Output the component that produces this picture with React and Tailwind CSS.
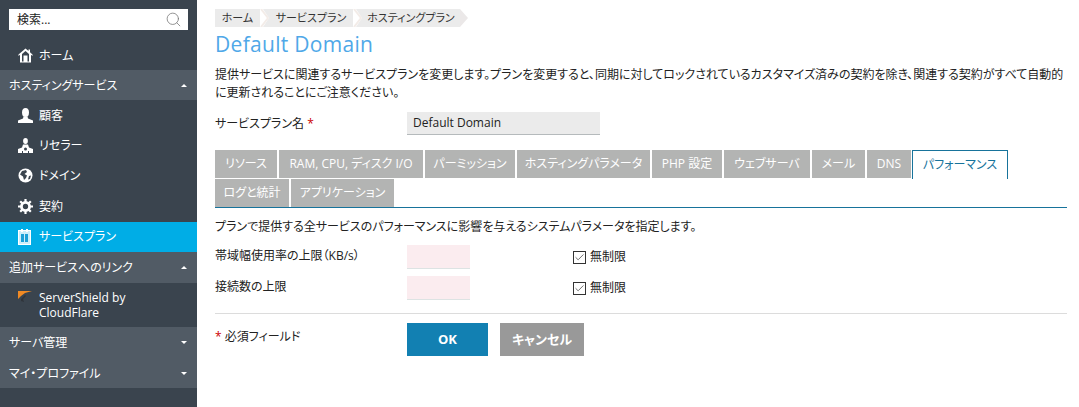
import React from "react";
import { Search, Check } from "lucide-react";

const jp = "font-['Open_Sans','Noto_Sans_CJK_JP',sans-serif] [font-feature-settings:'palt']";

const HomeIcon = () => (
    <svg width="15" height="15" viewBox="0 0 15 15" fill="#fff">
        <path d="M7.5 0.5 L10.5 3 V1.5 H12 V4.3 L14.5 6.5 V8 L13 6.8 V14.5 H2 V6.8 L0.5 8 V6.5 Z" />
        <path d="M7.5 3 L11 6 V13.5 H9.5 V7.5 H5.5 V13.5 H4 V6 Z" fill="#3a444e" />
        <rect x="6.5" y="8.5" width="2" height="5" fill="#fff" />
    </svg>
);
const UserIcon = () => (
    <svg width="15" height="15" viewBox="0 0 15 15" fill="#fff">
        <ellipse cx="7.5" cy="4.5" rx="3.5" ry="4.5" />
        <path d="M5.5 8.5 H9.5 L10 10.5 L15 12.5 V15 H0 V12.5 L5 10.5 Z" />
    </svg>
);
const ResellerIcon = () => (
    <svg width="15" height="15" viewBox="0 0 15 15" fill="#fff">
        <ellipse cx="7.5" cy="3" rx="2.4" ry="3" />
        <path d="M5 6.5 H10 L11 9.5 L15 11 V15 H0 V11 L4 9.5 Z" />
        <circle cx="7.5" cy="11" r="1.5" fill="#3a444e" />
        <rect x="4" y="13" width="1" height="2" fill="#3a444e" />
        <rect x="10" y="13" width="1" height="2" fill="#3a444e" />
    </svg>
);
const GlobeIcon = () => (
    <svg width="15" height="15" viewBox="0 0 15 15">
        <circle cx="7.5" cy="7.5" r="7" fill="#fff" />
        <path d="M4 3 L8 2 L9 4 L6.5 6 L9 7.5 L8 10 L6 12 L5 8.5 L2 6.5 Z M11 8 L13 7.5 L12 11 L10 11.5 Z" fill="#3a444e" />
    </svg>
);
const GearIcon = () => (
    <svg width="15" height="15" viewBox="0 0 24 24">
        <circle cx="12" cy="12" r="6.5" fill="none" stroke="#fff" strokeWidth="4.5" />
        <path d="M12 0v5M12 19v5M0 12h5M19 12h5M3.5 3.5l3.5 3.5M17 17l3.5 3.5M20.5 3.5L17 7M7 17l-3.5 3.5" stroke="#fff" strokeWidth="3.5" />
    </svg>
);
const PlanIcon = () => (
    <svg width="13" height="16" viewBox="0 0 13 16">
        <rect x="0.5" y="1.5" width="12" height="14" fill="#cdeefa" stroke="#fff" />
        <rect x="3" y="0" width="2" height="3" fill="#fff" />
        <rect x="8" y="0" width="2" height="3" fill="#fff" />
        <rect x="3" y="5" width="3" height="8" fill="#1b9fd6" />
        <rect x="7" y="5" width="3" height="8" fill="#1b9fd6" />
    </svg>
);
const FlagIcon = () => (
    <svg width="15" height="12" viewBox="0 0 15 12">
        <path d="M0 0 H14 L7 2 L3 5 L0 8 Z" fill="#f08a24" />
        <path d="M3 8 L7 4 L8 5 L5 8 L6 11 L3 10 Z" fill="#2f343a" />
    </svg>
);

const Caret = ({ up }) => (
    <span className={`h-0 w-0 border-x-[3px] border-x-transparent ${up ? "border-b-[3px] border-b-white" : "border-t-[3px] border-t-white"}`} />
);

const SectionHeader = ({ label, up, h }) => (
    <div className={`flex items-center justify-between bg-[#515b65] pl-[9px] pr-[10px] text-white ${h}`}>
        <span className="pt-[1px]">{label}</span>
        <Caret up={up} />
    </div>
);

const NavItem = ({ icon, label, h = "h-[30px]", active, extra = "" }) => (
    <div className={`flex items-center pl-[18px] text-white ${h} ${active ? "bg-[#00ade6]" : ""} ${extra}`}>
        <span className="flex w-[21px] shrink-0">{icon}</span>
        <span className={active ? "" : "pt-[1px]"}>{label}</span>
    </div>
);

const tabsRow1 = [
    ["リソース", "w-[62px]"],
    ["RAM, CPU, ディスク I/O", "w-[144px]"],
    ["パーミッション", "w-[90px]"],
    ["ホスティングパラメータ", "w-[133px]"],
    ["PHP 設定", "w-[70px]"],
    ["ウェブサーバ", "w-[86px]"],
    ["メール", "w-[53px]"],
    ["DNS", "w-[44px]"],
];

const Tab = ({ label, w }) => (
    <div className={`flex h-[28px] items-center justify-center whitespace-nowrap bg-[#b3b4b3] text-white ${w}`}>{label}</div>
);

const Chevron = ({ last }) => (
    <svg width="9" height="18" viewBox="0 0 9 18" className="shrink-0">
        {last ? (
            <path d="M0 0 L8 9 L0 18 Z" fill="#ebe8e8" />
        ) : (
            <>
                <path d="M3 0 H9 V18 H3 L9 9 Z" fill="#ebebeb" />
                <path d="M1 0 L8 9 L1 18" fill="none" stroke="#f3ece8" strokeWidth="2" />
            </>
        )}
    </svg>
);

const Breadcrumb = ({ label, w, last }) => (
    <div className="flex items-center">
        <div className={`flex h-[18px] items-center justify-center whitespace-nowrap bg-[#ebebeb] text-[11px] text-[#333] ${w}`}>{label}</div>
        <Chevron last={last} />
    </div>
);

const LimitRow = ({ label, mb }) => (
    <div className={`flex items-center ${mb}`}>
        <div className="-mt-[3px] w-[192px]">{label}</div>
        <div className="h-[24px] w-[63px] border-b border-b-[#dde3e3] bg-[#fbecef]" />
        <div className="ml-[103px] flex items-center gap-[4px]">
            <span className="flex h-[13px] w-[13px] items-center justify-center border border-[#333] bg-white">
                <Check size={11} strokeWidth={1.5} color="#333" />
            </span>
            <span>無制限</span>
        </div>
    </div>
);

const App = () => {
    return (
        <div className={`flex h-[407px] w-[1079px] overflow-hidden bg-white text-[12px] text-[#222] ${jp}`}>
            {/* Sidebar */}
            <div className="w-[197px] shrink-0 bg-[#3a444e]">
                <div className="px-[9px] pt-[9px]">
                    <div className="flex h-[21px] items-center justify-between bg-white pl-[8px] pr-[6px] text-[#222]">
                        <span>検索...</span>
                        <Search size={17} strokeWidth={1.1} color="#777" />
                    </div>
                </div>
                <NavItem icon={<HomeIcon />} label="ホーム" h="h-[40px]" extra="pt-[10px]" />
                <SectionHeader label="ホスティングサービス" up h="h-[30px]" />
                <NavItem icon={<UserIcon />} label="顧客" />
                <NavItem icon={<ResellerIcon />} label="リセラー" />
                <NavItem icon={<GlobeIcon />} label="ドメイン" />
                <NavItem icon={<GearIcon />} label="契約" h="h-[32px]" />
                <NavItem icon={<PlanIcon />} label="サービスプラン" active />
                <SectionHeader label="追加サービスへのリンク" up h="h-[31px]" />
                <div className="flex h-[44px] items-start pl-[18px] pt-[7px] text-white">
                    <span className="mt-[1px] flex w-[21px] shrink-0"><FlagIcon /></span>
                    <span className="w-[120px] leading-[15px]">ServerShield by CloudFlare</span>
                </div>
                <SectionHeader label="サーバ管理" h="h-[31px]" />
                <SectionHeader label="マイ・プロファイル" h="h-[30px]" />
            </div>

            {/* Main */}
            <div className="w-[852px] pl-[18px] pt-[9px]">
                <div className="flex">
                    <Breadcrumb label="ホーム" w="w-[45px]" />
                    <Breadcrumb label="サービスプラン" w="w-[84px]" />
                    <Breadcrumb label="ホスティングプラン" w="w-[98px]" last />
                </div>
                <h1 className="mt-[3px] text-[21px] leading-[28px] tracking-[0.3px] text-[#4fa8e8]">Default Domain</h1>
                <p className="mt-[8px] w-[852px] leading-[18px]">
                    提供サービスに関連するサービスプランを変更します。プランを変更すると、同期に対してロックされているカスタマイズ済みの契約を除き、関連する契約がすべて自動的に更新されることにご注意ください。
                </p>
                <div className="mt-[10px] flex items-center">
                    <div className="w-[192px]">サービスプラン名 <span className="text-[#c00]">*</span></div>
                    <div className="flex h-[23px] w-[193px] items-center border-b border-b-[#b5babc] bg-[#ebebeb] pl-[6px]">Default Domain</div>
                </div>

                {/* Tabs */}
                <div className="mt-[15px] w-[852px] border-b border-b-[#17739b]">
                    <div className="flex gap-[2px]">
                        {tabsRow1.map(([label, w]) => (
                            <Tab key={label} label={label} w={w} />
                        ))}
                        <div className="-ml-[1px] flex h-[29px] w-[96px] items-center justify-center whitespace-nowrap border-x border-t border-[#17739b] bg-white text-[#17739b]">パフォーマンス</div>
                    </div>
                    <div className="flex gap-[2px]">
                        <Tab label="ログと統計" w="w-[74px]" />
                        <Tab label="アプリケーション" w="w-[103px]" />
                    </div>
                </div>

                <p className="mt-[10px] leading-[18px]">プランで提供する全サービスのパフォーマンスに影響を与えるシステムパラメータを指定します。</p>
                <div className="mt-[9px]">
                    <LimitRow label="帯域幅使用率の上限（KB/s）" mb="mb-[7px]" />
                    <LimitRow label="接続数の上限" />
                </div>

                <div className="mt-[13px] flex w-[852px] border-t border-t-[#dcdcdc] pt-[9px]">
                    <div className="w-[192px] pt-[5px]"><span className="text-[#c00]">*</span> 必須フィールド</div>
                    <button className="h-[33px] w-[81px] bg-[#1280b2] text-[13px] font-bold text-white">OK</button>
                    <button className="ml-[12px] h-[33px] w-[84px] bg-[#999999] text-[13px] font-bold text-white">キャンセル</button>
                </div>
            </div>
        </div>
    );
};

export default App;
